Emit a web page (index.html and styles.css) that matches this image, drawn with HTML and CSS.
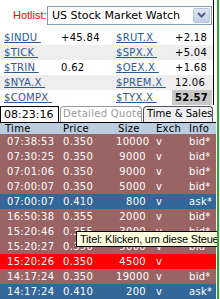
FILE: index.html
```html
<!DOCTYPE html>
<html>
<head>
<meta charset="utf-8">
<link rel="stylesheet" href="styles.css">
</head>
<body>
<div class="frame">
  <div class="app">
    <div class="upper">
      <div class="hotbar">
        <span class="hot-label">Hotlist:</span>
        <div class="select">
          <span class="select-text">US Stock Market Watch</span>
          <span class="select-btn"><svg width="9" height="6" viewBox="0 0 9 6"><path d="M1 1 L4.5 4.5 L8 1" fill="none" stroke="#4d6185" stroke-width="2"/></svg></span>
        </div>
      </div>
      <div class="quotes">
        <div class="qrow"><a class="sym">$INDU&nbsp;</a><span class="val">+45.84</span><a class="sym">$RUT.X&nbsp;</a><span class="val2">+2.18</span></div>
        <div class="qrow alt"><a class="sym">$TICK&nbsp;</a><span class="val"></span><a class="sym">$SPX.X&nbsp;</a><span class="val2">+5.04</span></div>
        <div class="qrow"><a class="sym">$TRIN&nbsp;</a><span class="val">0.62</span><a class="sym">$OEX.X&nbsp;</a><span class="val2">+1.68</span></div>
        <div class="qrow alt"><a class="sym">$NYA.X&nbsp;</a><span class="val"></span><a class="sym">$PREM.X&nbsp;</a><span class="val2">12.06</span></div>
        <div class="qrow"><a class="sym">$COMPX&nbsp;</a><span class="val"></span><a class="sym">$TYX.X&nbsp;</a><span class="val2 hl">52.57</span></div>
      </div>
    </div>
    <div class="tabs">
      <span class="clock">08:23:16</span>
      <span class="tab tab-off">Detailed Quote</span>
      <span class="tab tab-on">Time &amp; Sales</span>
    </div>
    <div class="ts">
      <div class="ts-head"><span class="c-time">Time</span><span class="c-price">Price</span><span class="c-size h">Size</span><span class="c-exch">Exch</span><span class="c-info">Info</span></div>
      <div class="ts-row brown"><span class="c-time">07:38:53</span><span class="c-price">0.350</span><span class="c-size">10000</span><span class="c-exch">v</span><span class="c-info">bid*</span></div>
      <div class="ts-row brown"><span class="c-time">07:30:25</span><span class="c-price">0.350</span><span class="c-size">9000</span><span class="c-exch">v</span><span class="c-info">bid*</span></div>
      <div class="ts-row brown"><span class="c-time">07:01:06</span><span class="c-price">0.350</span><span class="c-size">9000</span><span class="c-exch">v</span><span class="c-info">bid*</span></div>
      <div class="ts-row brown"><span class="c-time">07:00:07</span><span class="c-price">0.350</span><span class="c-size">5000</span><span class="c-exch">v</span><span class="c-info">bid*</span></div>
      <div class="ts-row blue"><span class="c-time">07:00:07</span><span class="c-price">0.410</span><span class="c-size">800</span><span class="c-exch">v</span><span class="c-info">ask*</span></div>
      <div class="ts-row brown"><span class="c-time">16:50:38</span><span class="c-price">0.355</span><span class="c-size">2000</span><span class="c-exch">v</span><span class="c-info">bid*</span></div>
      <div class="ts-row brown"><span class="c-time">15:20:46</span><span class="c-price">0.355</span><span class="c-size">3000</span><span class="c-exch">v</span><span class="c-info">bid*</span></div>
      <div class="ts-row brown"><span class="c-time">15:20:27</span><span class="c-price">0.350</span><span class="c-size">5000</span><span class="c-exch">v</span><span class="c-info">bid*</span></div>
      <div class="ts-row red"><span class="c-time">15:20:26</span><span class="c-price">0.350</span><span class="c-size">4500</span><span class="c-exch">v</span><span class="c-info"></span></div>
      <div class="ts-row brown"><span class="c-time">14:17:24</span><span class="c-price">0.350</span><span class="c-size">19000</span><span class="c-exch">v</span><span class="c-info">bid*</span></div>
      <div class="ts-row blue"><span class="c-time">14:17:24</span><span class="c-price">0.410</span><span class="c-size">200</span><span class="c-exch">v</span><span class="c-info">ask*</span></div>
    </div>
    <div class="tooltip">Titel: Klicken, um diese Steue</div>
  </div>
  <div class="green"></div>
</div>
</body>
</html>
```

FILE: styles.css
```css
html, body {
  margin: 0;
  padding: 0;
}
body {
  width: 220px;
  height: 299px;
  overflow: hidden;
  background: #fff;
  font-family: "DejaVu Sans", Verdana, sans-serif;
  font-size: 10px;
  letter-spacing: 0.3px;
}
.frame {
  display: flex;
  height: 299px;
}
.app {
  width: 217px;
  height: 299px;
  position: relative;
  overflow: hidden;
  display: flex;
  flex-direction: column;
  flex-shrink: 0;
}
.green {
  width: 2px;
  background: #2ea82e;
}
.upper {
  width: 213px;
  border-right: 1px solid #000;
}
.hotbar {
  height: 30px;
  display: flex;
  align-items: center;
  padding-left: 13px;
  box-sizing: border-box;
}
.hot-label {
  font-family: "Liberation Sans", Arial, sans-serif;
  font-size: 11px;
  letter-spacing: 0;
  color: #f00;
  width: 34px;
}
.select {
  width: 165px;
  height: 19px;
  box-sizing: border-box;
  border: 1px solid #7f9db9;
  display: flex;
  align-items: center;
  background: #fff;
}
.select-text {
  flex: 1;
  padding-left: 4px;
  font-size: 11px;
  letter-spacing: 0;
  color: #000;
}
.select-btn {
  width: 17px;
  height: 15px;
  margin-right: 1px;
  box-sizing: border-box;
  border: 1px solid #b5c3dc;
  border-radius: 2px;
  background: linear-gradient(#dfe6f4, #c3cfe6);
  display: flex;
  align-items: center;
  justify-content: center;
}
.quotes {
  display: flex;
  flex-direction: column;
}
.qrow {
  display: grid;
  grid-template-columns: 57px 55px 56px 1fr;
  height: 15px;
  padding-left: 4px;
  align-items: center;
  background: #fff;
}
.qrow.alt {
  background: #eeeeee;
}
.sym {
  color: #2a5a96;
  text-decoration: underline;
}
.val, .val2 {
  color: #000;
}
.val2 {
  padding-left: 3px;
  align-self: stretch;
  display: flex;
  align-items: center;
  margin-right: 1px;
}
.val2.hl {
  background: #c8c8c8;
  font-weight: bold;
}
.tabs {
  height: 18px;
  display: flex;
  align-items: flex-end;
  border-bottom: 1px solid #000;
  box-sizing: border-box;
  width: 216px;
  flex-shrink: 0;
}
.clock {
  flex: 0 0 59px;
  height: 16px;
  box-sizing: border-box;
  border: 1px solid #000;
  border-bottom: none;
  padding-left: 3px;
  font-size: 11px;
  letter-spacing: 0;
  line-height: 15px;
  background: #fff;
  margin-right: 1px;
  overflow: hidden;
  white-space: nowrap;
}
.tab {
  height: 16px;
  box-sizing: border-box;
  line-height: 14px;
  padding-left: 2px;
  border-radius: 4px 4px 0 0;
  border: 1px solid #999;
  border-bottom: none;
  overflow: hidden;
  white-space: nowrap;
}
.tab-off {
  flex: 0 0 82px;
  color: #9a9a9a;
  margin-right: 1px;
}
.tab-on {
  flex: 0 0 70px;
  border-color: #555;
  background: #eef0f4;
  color: #000;
  letter-spacing: 0;
  padding-left: 3px;
}
.ts {
  width: 216px;
  display: flex;
  flex-direction: column;
}
.ts-head, .ts-row {
  display: grid;
  grid-template-columns: 61px 55px 36px 37px 1fr;
  flex-shrink: 0;
}
.ts-head {
  height: 11px;
  line-height: 11px;
  background: #bccde0;
  color: #000;
}
.ts-row {
  height: 15px;
  line-height: 15px;
  color: #fff;
}
.brown { background: #9a6464; }
.blue { background: #336699; }
.red { background: #ff0000; }
.c-time { padding-left: 7px; }
.ts-head .c-time { padding-left: 5px; }
.c-price { padding-left: 2px; }
.c-size { text-align: right; padding-right: 6px; }
.c-size.h { text-align: left; padding-left: 2px; padding-right: 0; }
.c-exch { padding-left: 4px; }
.c-info { padding-left: 0; }
.tooltip {
  position: absolute;
  left: 76px;
  top: 231px;
  height: 16px;
  box-sizing: border-box;
  border: 1px solid #000;
  border-right: none;
  background: #ffffe1;
  color: #000;
  font-family: "Liberation Sans", Arial, sans-serif;
  font-size: 11px;
  letter-spacing: -0.2px;
  line-height: 14px;
  padding: 0 0 0 3px;
  white-space: nowrap;
  width: 141px;
  overflow: hidden;
}
```
